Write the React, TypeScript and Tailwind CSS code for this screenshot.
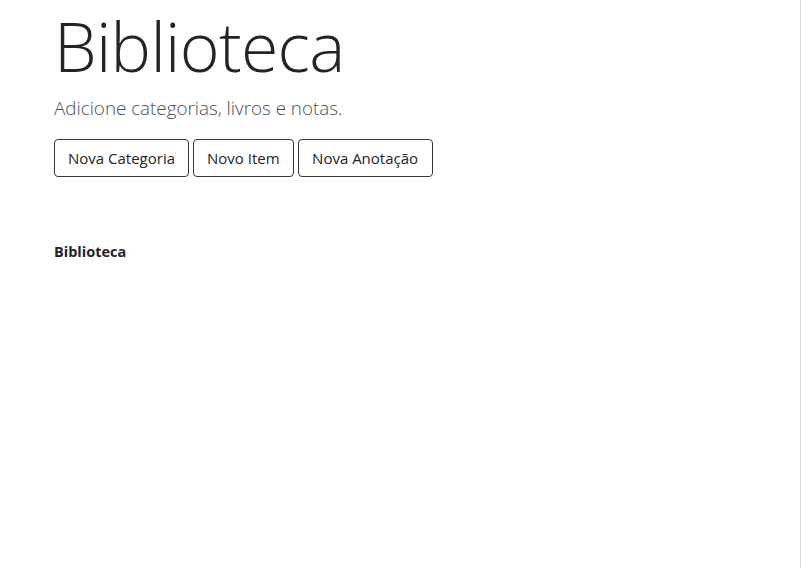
export default function App() {
  return (
    <div className="flex min-h-[568px] w-[801px] bg-white">
      <div className="flex-1 pl-[54px] font-['Open_Sans',sans-serif] text-[#212529]">
        <h1 className="text-[68px] font-light leading-[92px] tracking-[-0.7px]">Biblioteca</h1>
        <p className="mt-[2px] text-[18.8px] font-light leading-[28px] text-[#4a4f55]">
          Adicione categorias, livros e notas.
        </p>
        <div className="mt-[17px] flex gap-[4px]">
          <button className="h-[38px] rounded-[4px] border border-[#343a40] px-[13px] text-[15px] text-[#212529]">
            Nova Categoria
          </button>
          <button className="h-[38px] rounded-[4px] border border-[#343a40] px-[13px] text-[15px] text-[#212529]">
            Novo Item
          </button>
          <button className="h-[38px] rounded-[4px] border border-[#343a40] px-[13.5px] text-[15px] text-[#212529]">
            Nova Anotação
          </button>
        </div>
        <div className="mt-[64px] text-[14.5px] font-bold text-[#212529]">Biblioteca</div>
      </div>
      <div className="w-px self-stretch bg-[#dcdcdc]" />
    </div>
  );
}
